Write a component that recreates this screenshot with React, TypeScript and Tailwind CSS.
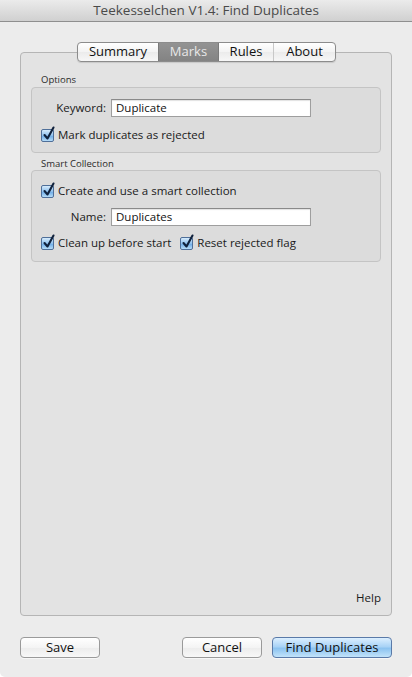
import React from "react";

const font = { fontFamily: '"Open Sans", "DejaVu Sans", sans-serif' };

function Check({ className = "" }: { className?: string }) {
  return (
    <span className={"relative inline-block w-[13px] h-[13px] shrink-0 " + className}>
      <span className="absolute inset-0 rounded-[2px] border border-[#4f6f99] bg-[linear-gradient(#d6ebfc,#8fc1ee_50%,#6aa9e6_51%,#b6dcf8)]" />
      <svg className="absolute left-[1px] top-[-3px]" width="14" height="15" viewBox="0 0 14 15">
        <path d="M2.5 9 L5.5 12.5 L11.5 1.5" fill="none" stroke="#10223d" strokeWidth="2.1" strokeLinecap="round" strokeLinejoin="round" />
      </svg>
    </span>
  );
}

function CheckRow({ label, className = "" }: { label: string; className?: string }) {
  return (
    <div className={"flex items-center gap-[4px] " + className}>
      <Check />
      <span className="text-[11.5px] leading-[14px] text-[#1a1a1a]">{label}</span>
    </div>
  );
}

function Field({ label, value }: { label: string; value: string }) {
  return (
    <div className="flex items-center">
      <span className="w-[70px] text-right text-[11.5px] text-[#1a1a1a] pr-[5px]">{label}</span>
      <div className="w-[200px] h-[18px] bg-white border border-[#9e9e9e] border-t-[#8a8a8a] shadow-[inset_0_1px_1px_rgba(0,0,0,0.12)] flex items-center pl-[4px] text-[11.5px] text-[#111]">
        {value}
      </div>
    </div>
  );
}

function Btn({ label, w, blue }: { label: string; w: string; blue?: boolean }) {
  return (
    <div
      className={
        "h-[21px] rounded-[4px] border flex items-center justify-center text-[13px] text-[#111] shadow-[0_1px_0_rgba(255,255,255,0.6)] " +
        w +
        (blue
          ? " border-[#5a7aa8] bg-[linear-gradient(#dcefff,#a9d3f6_45%,#8cc3f0_55%,#c2e3fa)]"
          : " border-[#9a9a9a] bg-[linear-gradient(#ffffff,#f4f4f4_50%,#ececec_51%,#f8f8f8)]")
      }
    >
      {label}
    </div>
  );
}

export default function App() {
  return (
    <div className="w-[412px] h-[677px] bg-white" style={font}>
      <div className="w-[412px] h-[677px] bg-[#ececec] rounded-b-[5px] flex flex-col">
        <div className="h-[22px] shrink-0 border-b border-[#8f8f8f] bg-[linear-gradient(#ebebeb,#d0d0d0)] flex items-center justify-center text-[13.5px] text-[#4a4a4a]">
          Teekesselchen V1.4: Find Duplicates
        </div>

        <div className="mt-[30px] mx-[20px] h-[564px] rounded-[4px] border border-[#b5b5b5] bg-[#e3e3e3] flex flex-col px-[10px]">
          <div className="-mt-[11px] flex justify-center ml-[1px]">
            <div className="flex h-[20px] rounded-[4px] border border-[#8c8c8c] overflow-hidden bg-[linear-gradient(#ffffff,#f3f3f3_50%,#ebebeb_51%,#f7f7f7)] text-[13px] shadow-[0_1px_1px_rgba(0,0,0,0.12)]">
              <div className="w-[80px] flex items-center justify-center text-[#111]">Summary</div>
              <div className="w-[61px] flex items-center justify-center text-[#e8e8e8] bg-[linear-gradient(#939393,#838383)] border-x border-[#7a7a7a]">Marks</div>
              <div className="w-[55px] flex items-center justify-center text-[#111] border-r border-[#c8c8c8]">Rules</div>
              <div className="w-[61px] flex items-center justify-center text-[#111]">About</div>
            </div>
          </div>

          <div className="mt-[12px] ml-[10px] text-[9.5px] leading-[12px] text-[#2a2a2a]">Options</div>
          <div className="mt-[1px] h-[66px] rounded-[4px] border border-[#c4c4c4] bg-[#dcdcdc] pt-[11px] pl-[9px]">
            <Field label="Keyword:" value="Duplicate" />
            <CheckRow label="Mark duplicates as rejected" className="mt-[11px]" />
          </div>

          <div className="mt-[5px] ml-[10px] text-[9.5px] leading-[12px] text-[#2a2a2a]">Smart Collection</div>
          <div className="h-[92px] rounded-[4px] border border-[#c4c4c4] bg-[#dcdcdc] pt-[13px] pl-[9px]">
            <CheckRow label="Create and use a smart collection" />
            <div className="mt-[10px]">
              <Field label="Name:" value="Duplicates" />
            </div>
            <div className="mt-[10px] flex items-center">
              <CheckRow label="Clean up before start" />
              <CheckRow label="Reset rejected flag" className="ml-[9px]" />
            </div>
          </div>

          <div className="flex-1" />
          <div className="flex justify-end pb-[9px] text-[11.5px] text-[#1a1a1a]">Help</div>
        </div>

        <div className="mt-[21px] mx-[20px] flex items-center">
          <Btn label="Save" w="w-[80px]" />
          <div className="flex-1" />
          <Btn label="Cancel" w="w-[80px]" />
          <div className="w-[10px]" />
          <Btn label="Find Duplicates" w="w-[120px]" blue />
        </div>
      </div>
    </div>
  );
}
